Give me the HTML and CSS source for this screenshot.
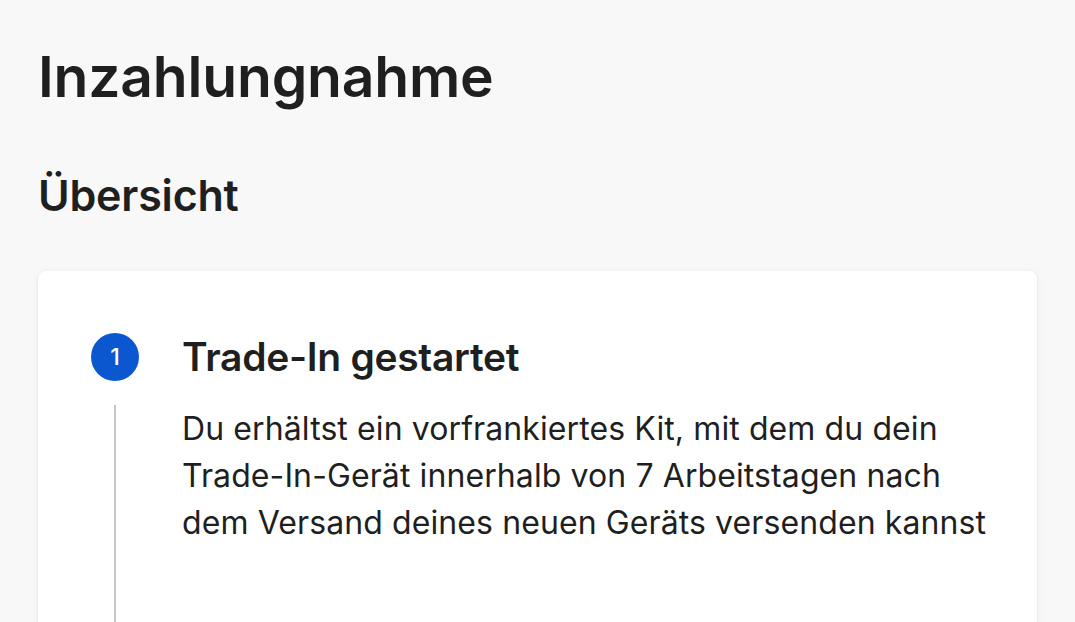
FILE: index.html
```html
<!DOCTYPE html>
<html lang="de">
<head>
    <meta charset="UTF-8">
    <meta name="viewport" content="width=device-width, initial-scale=1.0">
    <title>Inzahlungnahme</title>
    <link rel="stylesheet" href="styles.css">
</head>
<body>
    <div class="page">
        <h1 class="page-title">Inzahlungnahme</h1>
        <h2 class="section-title">Übersicht</h2>

        <div class="card">
            <div class="step">
                <div class="step-marker">1</div>
                <div class="step-title">Trade-In gestartet</div>
                <div class="step-line"></div>
                <p class="step-text">Du erhältst ein vorfrankiertes Kit, mit dem du dein Trade-In-Gerät innerhalb von 7 Arbeitstagen nach dem Versand deines neuen Geräts versenden kannst</p>
            </div>
        </div>
    </div>
</body>
</html>
```

FILE: styles.css
```css
body {
    margin: 0;
    background-color: #f8f8f8;
    color: #1f1f1f;
    font-family: 'Inter', 'Roboto', sans-serif;
}
.page {
    padding: 43px 38px 0 38px;
}
.page-title {
    margin: 0;
    font-size: 57px;
    line-height: 68px;
    font-weight: 600;
    letter-spacing: -0.2px;
}
.section-title {
    margin: 58px 0 0 0;
    font-size: 43px;
    line-height: 52px;
    font-weight: 600;
    letter-spacing: -0.2px;
}
.card {
    margin-top: 50px;
    background: white;
    border-radius: 8px;
    box-shadow: 0 1px 3px rgba(0,0,0,0.08), 0 2px 10px rgba(0,0,0,0.05);
    padding: 62px 45px 0 53px;
}
.step {
    display: grid;
    grid-template-columns: 48px 1fr;
    column-gap: 43px;
    row-gap: 24px;
}
.step-marker {
    width: 48px;
    height: 48px;
    border-radius: 50%;
    background: #0b57d0;
    color: white;
    font-size: 23px;
    font-weight: 500;
    display: flex;
    align-items: center;
    justify-content: center;
}
.step-title {
    font-size: 39px;
    line-height: 48px;
    font-weight: 600;
    letter-spacing: -0.3px;
}
.step-line {
    justify-self: center;
    width: 2px;
    background: #c4c7c5;
}
.step-text {
    margin: 0;
    padding-bottom: 90px;
    font-size: 32px;
    line-height: 47px;
    letter-spacing: 0.1px;
}
```
